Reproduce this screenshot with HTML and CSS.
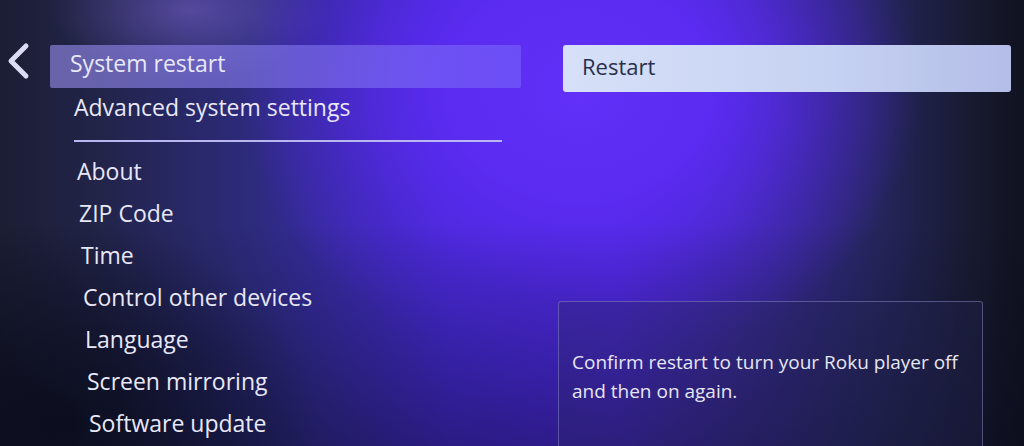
FILE: index.html
```html
<!DOCTYPE html>
<html lang="en">
<head>
    <meta charset="UTF-8">
    <meta name="viewport" content="width=device-width, initial-scale=1.0">
    <title>Settings - System</title>
    <link rel="stylesheet" href="styles.css">
</head>
<body>
    <div id="screen">
        <div class="menu-col">
            <div class="menu-top">
                <div class="back">
                    <svg width="26" height="38" viewBox="0 0 26 38">
                        <path d="M20 4 L5 19 L20 34" fill="none" stroke="#dcdcf4" stroke-width="5" stroke-linecap="round" stroke-linejoin="round"/>
                    </svg>
                </div>
                <div class="item selected">System restart</div>
            </div>
            <div class="item advanced">Advanced system settings</div>
            <div class="divider"></div>
            <ul class="menu-list">
                <li class="i1">About</li>
                <li class="i2">ZIP Code</li>
                <li class="i3">Time</li>
                <li class="i4">Control other devices</li>
                <li class="i5">Language</li>
                <li class="i6">Screen mirroring</li>
                <li class="i7">Software update</li>
            </ul>
        </div>
        <div class="side-col">
            <div class="restart-btn">Restart</div>
            <div class="info-box">
                <p>Confirm restart to turn your Roku player off and then on again.</p>
            </div>
        </div>
    </div>
</body>
</html>
```

FILE: styles.css
```css
html, body {
    margin: 0;
    padding: 0;
    height: 100%;
}

body {
    font-family: "Open Sans", "DejaVu Sans", sans-serif;
    color: #e8e8f8;
    overflow: hidden;
}

#screen {
    width: 1024px;
    height: 446px;
    display: flex;
    background:
        radial-gradient(ellipse 260px 200px at 60px 420px, rgba(8, 10, 24, 0.75) 0%, rgba(8, 10, 24, 0) 100%),
        linear-gradient(to bottom, rgba(8, 10, 28, 0) 50%, rgba(8, 10, 28, 0.45) 100%),
        radial-gradient(ellipse 340px 280px at 580px 90px, #6230f8 0%, #5a2bf0 40%, rgba(80, 40, 220, 0.45) 75%, rgba(60, 30, 160, 0) 100%),
        radial-gradient(ellipse 140px 70px at 190px 10px, rgba(120, 100, 200, 0.55) 0%, rgba(120, 100, 200, 0) 100%),
        linear-gradient(to right, #1c1e34 0%, #22244a 10%, #2d2b7e 25%, #4629d8 44%, #5028ea 60%, #3d2aa6 72%, #262660 85%, #181a30 95%, #101220 100%);
}

.menu-col {
    width: 540px;
    padding-top: 45px;
}

.menu-top {
    display: flex;
    align-items: flex-start;
}

.back {
    width: 50px;
    margin-top: -3px;
    padding-left: 6px;
    box-sizing: border-box;
    display: flex;
}

.item {
    font-size: 23px;
    font-weight: 500;
    line-height: 43px;
}

.selected {
    width: 471px;
    height: 43px;
    line-height: 37px;
    padding-left: 20px;
    box-sizing: border-box;
    background: linear-gradient(to right, rgba(150, 140, 235, 0.62), rgba(120, 105, 250, 0.55));
    border-radius: 2px;
}

.advanced {
    padding-left: 74px;
    line-height: 38px;
}

.divider {
    margin: 14px 0 0 74px;
    width: 428px;
    height: 2px;
    background: #b9b6f2;
}

.menu-list {
    list-style: none;
    margin: 8px 0 0;
    padding: 0;
    font-size: 23px;
    font-weight: 500;
}

.menu-list li {
    height: 42px;
    line-height: 42px;
}

/* the list drifts right a little toward the bottom */
.i1 { padding-left: 77px; }
.i2 { padding-left: 79px; }
.i3 { padding-left: 81px; }
.i4 { padding-left: 83px; }
.i5 { padding-left: 85px; }
.i6 { padding-left: 87px; }
.i7 { padding-left: 89px; }

.side-col {
    flex: 1;
    padding-top: 45px;
    padding-left: 23px;
}

.restart-btn {
    width: 448px;
    height: 47px;
    box-sizing: border-box;
    padding-left: 19px;
    line-height: 43px;
    font-size: 22px;
    font-weight: 500;
    color: #2a2f4c;
    background: linear-gradient(to right, #d6e0f8, #c6d2f2 60%, #b3bde8);
    border-radius: 3px;
}

.info-box {
    margin: 209px 0 0 -5px;
    width: 425px;
    height: 160px;
    box-sizing: border-box;
    padding: 46px 10px 0 13px;
    border: 1px solid rgba(150, 150, 210, 0.45);
    border-radius: 3px;
    background: rgba(40, 40, 90, 0.3);
}

.info-box p {
    margin: 0;
    font-size: 19px;
    font-weight: 500;
    line-height: 29px;
    color: #e6e6f2;
}
```
